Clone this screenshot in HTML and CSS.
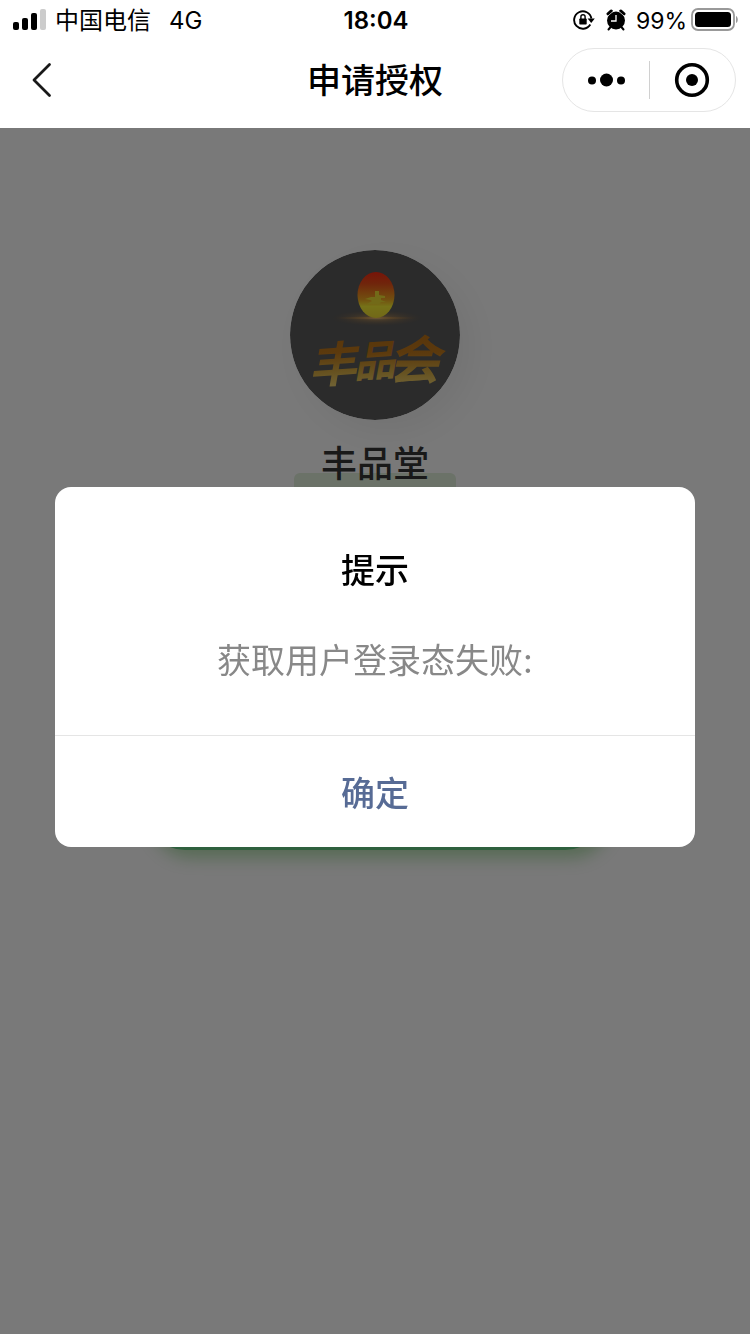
FILE: index.html
```html
<!DOCTYPE html>
<html lang="zh-CN">
<head>
<meta charset="utf-8">
<meta name="viewport" content="width=device-width">
<title>申请授权</title>
<link rel="stylesheet" href="styles.css">
</head>
<body>
<header class="top">
  <div class="status">
    <div class="status-left">
      <svg class="signal" width="34" height="22" viewBox="0 0 34 22" aria-hidden="true">
        <rect x="0" y="13" width="6" height="8" rx="2"/>
        <rect x="9" y="9" width="6" height="12" rx="2"/>
        <rect x="18" y="4" width="6" height="17" rx="2"/>
        <rect x="27" y="0" width="6" height="21" rx="2" fill="#ccc"/>
      </svg>
      <span class="label">中国电信</span>
      <span class="label network">4G</span>
    </div>
    <span class="label time">18:04</span>
    <div class="status-right">
      <svg width="22" height="22" viewBox="0 0 22 22" aria-hidden="true">
        <path d="M17.300 15.500A8.700 8.700 0 1 1 18.400 9.500" fill="none" stroke="#000" stroke-width="1.900"/>
        <path d="M14.600 9.500h7.200l-3.600 4.500z"/>
        <rect x="6.300" y="9.500" width="7.400" height="6" rx="0.800"/>
        <path d="M7.900 10V7.800a2.100 2.100 0 0 1 4.200 0V10" fill="none" stroke="#000" stroke-width="1.400"/>
      </svg>
      <svg class="alarm" width="20" height="22" viewBox="0 0 20 22" aria-hidden="true">
        <circle cx="10" cy="11.500" r="9"/>
        <path d="M2 4.800L5.300 2M18 4.800L14.700 2" stroke="#000" stroke-width="3" stroke-linecap="round"/>
        <path d="M2 6.800L7.300 2.300M18 6.800L12.700 2.300" stroke="#fff" stroke-width="0.600"/>
        <path d="M4.200 18.500l-1.700 2M15.800 18.500l1.700 2" stroke="#000" stroke-width="2" stroke-linecap="round"/>
        <path d="M10 6v6H5" fill="none" stroke="#fff" stroke-width="1.300"/>
      </svg>
      <span class="label percent">99%</span>
      <svg width="48" height="24" viewBox="0 0 48 24" aria-hidden="true">
        <rect x="1" y="1" width="42" height="21" rx="6" fill="none" stroke="#999" stroke-width="1.800"/>
        <rect x="4" y="4" width="36" height="15" rx="3.500"/>
        <path d="M45 8c2.400 1 2.400 6 0 7z" fill="#999"/>
      </svg>
    </div>
  </div>
  <nav class="nav">
    <button class="back" type="button" aria-label="返回">
      <svg width="22" height="36" viewBox="0 0 22 36" aria-hidden="true"><path d="M18.500 2.500L3 18l15.500 15.500" fill="none" stroke="#191919" stroke-width="2.800" stroke-linecap="round" stroke-linejoin="round"/></svg>
    </button>
    <h1 class="nav-title">申请授权</h1>
    <div class="capsule">
      <button class="capsule-button" type="button" aria-label="更多">
        <svg width="38" height="16" viewBox="0 0 38 16" aria-hidden="true"><circle cx="5" cy="8.500" r="4"/><circle cx="19.500" cy="8" r="6.500"/><circle cx="34" cy="8.500" r="4"/></svg>
      </button>
      <button class="capsule-button" type="button" aria-label="关闭">
        <svg width="36" height="36" viewBox="0 0 36 36" aria-hidden="true"><circle cx="18" cy="18" r="15.300" fill="none" stroke="#000" stroke-width="3.600"/><circle cx="18" cy="18" r="6"/></svg>
      </button>
    </div>
  </nav>
</header>

<main class="page">
  <svg class="avatar" viewBox="0 0 170 170" role="img" aria-label="丰品会">
    <defs>
      <linearGradient id="sun" x1="0" y1="0" x2="0" y2="1">
        <stop offset="0" stop-color="#f02810"/><stop offset=".25" stop-color="#e04a18"/><stop offset=".6" stop-color="#e4a020"/><stop offset=".75" stop-color="#ece430"/><stop offset="1" stop-color="#e4d030"/>
      </linearGradient>
      <linearGradient id="gold" gradientUnits="userSpaceOnUse" x1="0" y1="82" x2="0" y2="136">
        <stop offset="0" stop-color="#b06a14"/><stop offset=".4" stop-color="#b8741c"/><stop offset=".75" stop-color="#cda542"/><stop offset="1" stop-color="#e0c468"/>
      </linearGradient>
      <radialGradient id="glow">
        <stop offset="0" stop-color="#ffe6b0"/><stop offset=".3" stop-color="#d09850" stop-opacity=".7"/><stop offset="1" stop-color="#806040" stop-opacity="0"/>
      </radialGradient>
    </defs>
    <circle cx="85" cy="85" r="85" fill="#565656"/>
    <ellipse cx="87" cy="68" rx="46" ry="8" fill="url(#glow)" opacity=".6"/>
    <ellipse cx="86" cy="68" rx="42" ry="2" fill="url(#glow)"/>
    <ellipse cx="86" cy="45" rx="18.500" ry="23" fill="url(#sun)"/>
    <path d="M85 41h4v4l6 1v2h-4v2l5 2h-5l-2 3-4-1-8 0 5-3-2-1-5-1 6-2h4z" fill="#e4d430"/>
    <g class="logo-text" fill="url(#gold)">
      <text x="18" y="132" font-size="48" transform="rotate(-4 44 112)">丰</text>
      <text x="63" y="126" font-size="42" transform="rotate(-4 84 108)">品</text>
      <text x="98" y="129" font-size="52">会</text>
    </g>
  </svg>
  <h2 class="name">丰品堂</h2>
  <button class="login" type="button" aria-label="授权登录"></button>
</main>

<div class="mask">
  <section class="dialog" role="dialog" aria-modal="true" aria-labelledby="dialog-title">
    <div class="dialog-body">
      <h2 class="dialog-title" id="dialog-title">提示</h2>
      <p class="dialog-text">获取用户登录态失败:</p>
    </div>
    <button class="confirm" type="button">确定</button>
  </section>
</div>
</body>
</html>
```
FILE: styles.css
```css
* { box-sizing: border-box; }

body {
  margin: 0;
  min-height: 100vh;
  background: #f2f2f2;
  color: #000;
  font-family: Inter, "Noto Sans CJK SC", sans-serif;
}

h1, h2, p { margin: 0; }

button {
  padding: 0;
  border: 0;
  background: none;
  font-family: inherit;
}

svg { display: block; flex: none; }

.top {
  position: relative;
  z-index: 2;
  padding-bottom: 8px;
  background: #fff;
}

.status {
  display: grid;
  grid-template-columns: 1fr auto 1fr;
  align-items: center;
  height: 40px;
  padding: 0 11px 0 13px;
  font-size: 24px;
  line-height: 32px;
}

.status-left, .status-right {
  display: flex;
  align-items: center;
  white-space: nowrap;
}

.label { padding-top: 2px; }
.status-left { gap: 8px; }
.status-right { justify-content: flex-end; }
.network { margin-left: 10px; }
.time { font-weight: 600; }
.alarm { margin: 0 10px 0 11px; }

.percent {
  margin-right: 4px;
  font-size: 23px;
}

.nav {
  display: grid;
  grid-template-columns: 1fr auto 1fr;
  align-items: center;
  height: 80px;
  padding: 0 14px;
}

.back {
  justify-self: start;
  margin-left: 17px;
}

.nav-title {
  padding-top: 2px;
  font-size: 34px;
  font-weight: 500;
  line-height: 48px;
}

.capsule {
  display: flex;
  align-items: center;
  justify-self: end;
  width: 174px;
  height: 64px;
  border: 1px solid #e5e5e5;
  border-radius: 32px;
}

.capsule-button {
  display: flex;
  flex: 1;
  align-items: center;
  justify-content: center;
  height: 38px;
}

.capsule-button + .capsule-button { border-left: 1px solid #d0d0d0; }

.page {
  display: flex;
  flex-direction: column;
  align-items: center;
  padding: 122px 24px 0;
}

.avatar {
  width: 170px;
  height: 170px;
  border-radius: 50%;
  box-shadow: 12px 12px 30px rgba(0, 0, 0, .05);
}

.logo-text {
  font-family: "Noto Sans CJK SC", sans-serif;
  font-style: italic;
  font-weight: 700;
}

.name {
  position: relative;
  z-index: 0;
  width: 162px;
  margin-top: 18px;
  color: #333;
  font-size: 36px;
  font-weight: 500;
  line-height: 52px;
  text-align: center;
}

.name::before {
  content: "";
  position: absolute;
  z-index: -1;
  right: 0;
  bottom: -3px;
  left: 0;
  height: 20px;
  border-radius: 6px;
  background: #d6e4d0;
}

.login {
  width: 100%;
  max-width: 460px;
  height: 80px;
  margin-top: 280px;
  border-radius: 40px;
  background: #5ec07c;
  box-shadow: 6px 8px 16px rgba(70, 170, 60, .4);
}

.mask {
  position: fixed;
  z-index: 1;
  inset: 0;
  display: flex;
  align-items: center;
  justify-content: center;
  padding: 0 55px;
  background: rgba(0, 0, 0, .5);
}

.dialog {
  width: 100%;
  max-width: 640px;
  overflow: hidden;
  border-radius: 16px;
  background: #fff;
  text-align: center;
}

.dialog-body {
  padding: 60px 40px 50px;
}

.dialog-title {
  font-size: 34px;
  font-weight: 500;
  line-height: 48px;
}

.dialog-text {
  margin-top: 42px;
  color: #888;
  font-size: 34px;
  line-height: 48px;
}

.confirm {
  width: 100%;
  height: 112px;
  border-top: 1px solid #e5e5e5;
  color: #576b95;
  font-size: 34px;
  font-weight: 500;
}
```
